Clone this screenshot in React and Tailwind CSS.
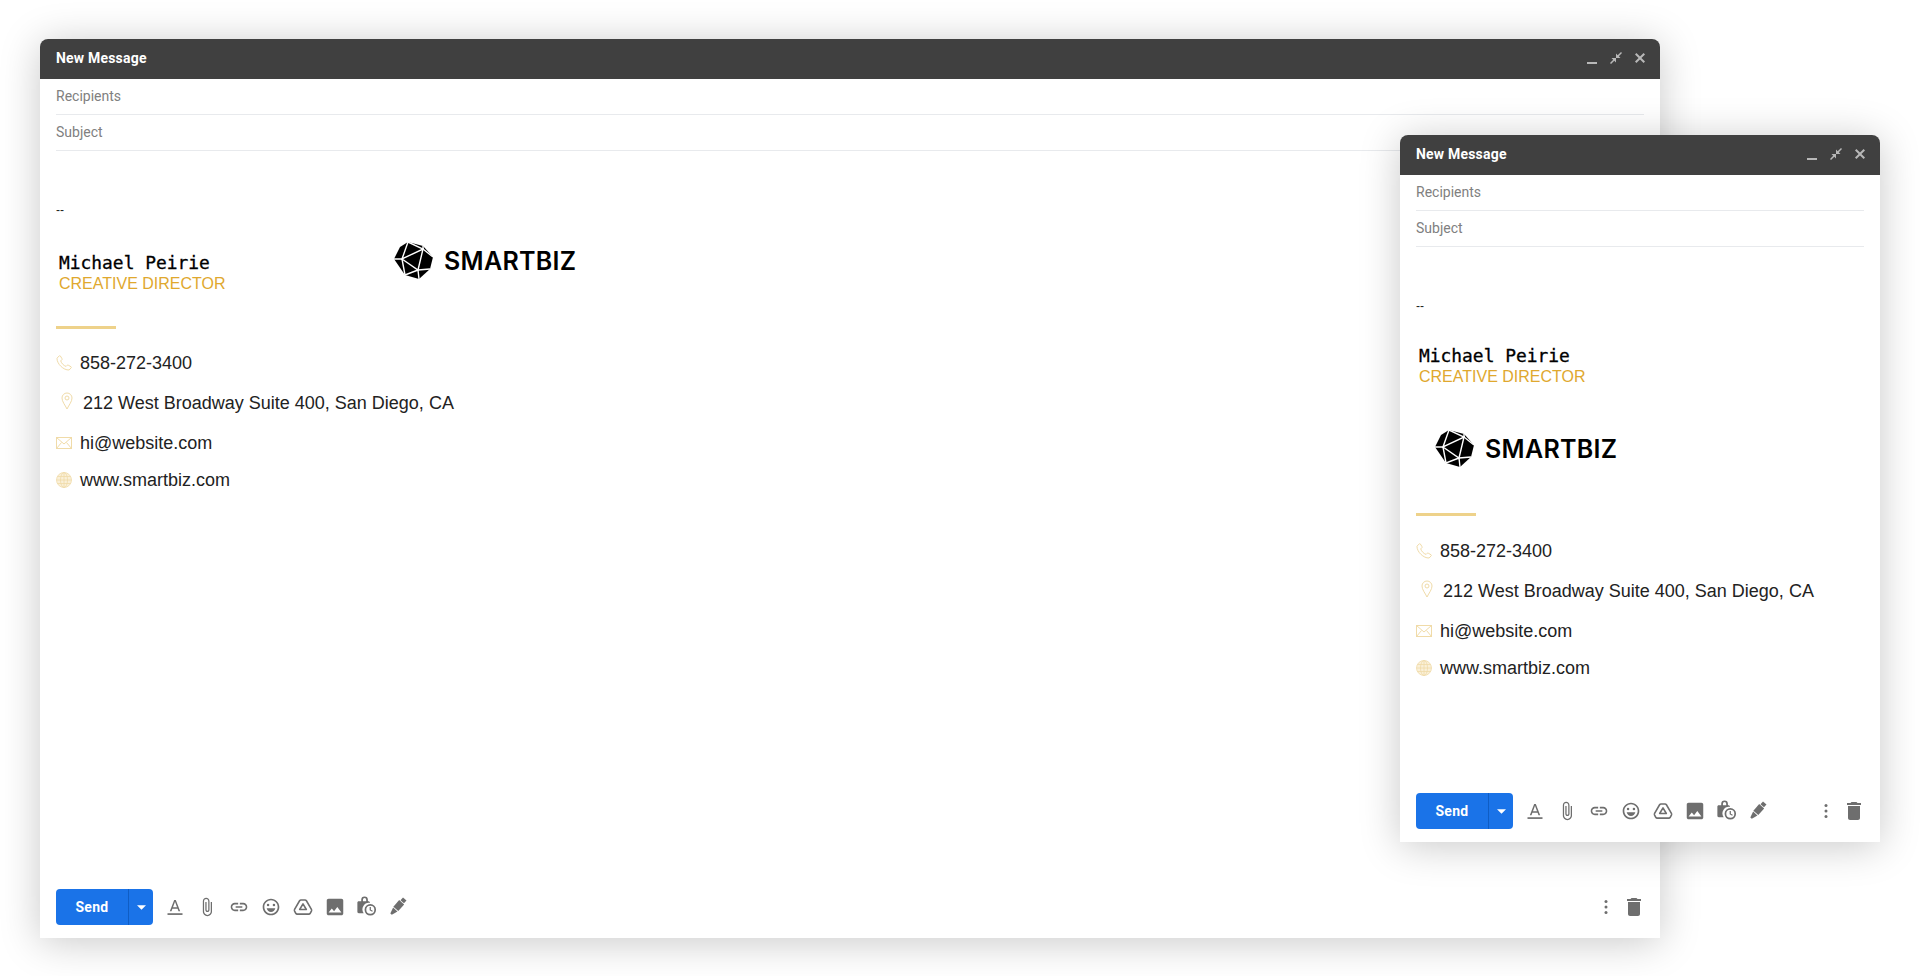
const Ic = ({ children, className = "w-5 h-5" }) => (
  <svg viewBox="0 0 24 24" className={"shrink-0 fill-[#6e6e6e] " + className}>{children}</svg>
);

function ToolIcons() {
  return (
    <div className="flex items-center ml-[12px] gap-[12px] -mt-[1px]">
      <Ic><path d="M11 3.500 5.800 17h2l1.100-3h6.200l1.100 3h2L13 3.500h-2zm-1.400 8.700L12 5.800l2.400 6.400H9.600z" /><rect x="3" y="19.500" width="18" height="2" /></Ic>
      <Ic><path d="M16.500 6v11.500c0 2.210-1.790 4-4 4s-4-1.790-4-4V5c0-1.380 1.120-2.500 2.500-2.500s2.500 1.120 2.500 2.500v10.500c0 .55-.45 1-1 1s-1-.45-1-1V6H10v9.500c0 1.380 1.120 2.500 2.500 2.500s2.500-1.120 2.500-2.500V5c0-2.210-1.790-4-4-4S7 2.790 7 5v12.500c0 3.040 2.460 5.500 5.500 5.500s5.500-2.460 5.500-5.500V6h-1.500z" /></Ic>
      <Ic><path d="M3.900 12c0-1.710 1.390-3.100 3.100-3.100h4V7H7c-2.760 0-5 2.240-5 5s2.240 5 5 5h4v-1.900H7c-1.710 0-3.100-1.390-3.100-3.100zM8 13h8v-2H8v2zm9-6h-4v1.900h4c1.710 0 3.100 1.390 3.100 3.100s-1.390 3.100-3.100 3.100h-4V17h4c2.760 0 5-2.240 5-5s-2.240-5-5-5z" /></Ic>
      <Ic><path d="M11.990 2C6.470 2 2 6.480 2 12s4.470 10 9.990 10C17.520 22 22 17.520 22 12S17.520 2 11.990 2zM12 20c-4.420 0-8-3.580-8-8s3.580-8 8-8 8 3.580 8 8-3.580 8-8 8z" /><circle cx="8.500" cy="9.500" r="1.500" /><circle cx="15.500" cy="9.500" r="1.500" /><path d="M6.800 13.500h10.400c-.6 2.600-2.700 4.500-5.200 4.500s-4.600-1.900-5.200-4.500z" /></Ic>
      <Ic><path d="M9.600 3.500h4.800c.7 0 1.300.4 1.700 1l6 10.400c.3.600.3 1.400 0 2l-1.400 2.600c-.4.600-1 1-1.700 1H5c-.7 0-1.300-.4-1.700-1l-1.400-2.600c-.3-.6-.3-1.400 0-2l6-10.400c.4-.6 1-1 1.700-1z" fill="none" stroke="#6e6e6e" strokeWidth="1.900" /><path d="M12 8.200 16 15H8z" fill="none" stroke="#6e6e6e" strokeWidth="1.900" strokeLinejoin="round" /></Ic>
      <Ic className="w-[22px] h-[22px] -mx-[1px]"><path d="M21 19V5c0-1.100-.9-2-2-2H5c-1.100 0-2 .9-2 2v14c0 1.100.9 2 2 2h14c1.100 0 2-.9 2-2zM8.500 13.500l2.500 3.010L14.500 12l4.500 6H5l3.500-4.500z" /></Ic>
      <Ic className="w-[23px] h-[23px] -mx-[1.500px] -translate-x-[1.500px] -translate-y-[1px]"><path d="M7 7.500V6a3.500 3.500 0 0 1 7 0v1.500h.5c1 0 1.500.6 1.500 1.500v.3a6.800 6.800 0 0 0-6.400 10.700H4.500c-1 0-1.500-.6-1.500-1.500V9c0-.9.5-1.500 1.500-1.500H7zm1.800 0h3.400V6a1.700 1.700 0 0 0-3.400 0v1.500z" /><path d="M16.500 10.500a6 6 0 1 0 0 12 6 6 0 0 0 0-12zm0 10.200a4.200 4.200 0 1 1 0-8.400 4.200 4.200 0 0 1 0 8.400zm.6-7.200h-1.300v3.500l2.700 1.600.6-1-2-1.200v-2.900z" /></Ic>
      <Ic className="w-5 h-5 -translate-x-[1.500px]">
        <g transform="rotate(42 12 12)">
          <rect x="9.200" y="-1" width="5.600" height="4.500" />
          <path d="M8 4.500h8v10.500h-8z" />
          <path d="M8.500 16h7L13.200 23.500h-2.400z" />
        </g>
      </Ic>
    </div>
  );
}

function Logo({ className = "" }) {
  return (
    <div className={"flex items-center h-[40px] " + className}>
      <svg viewBox="0 0 40 38" className="w-[40px] h-[38px] shrink-0">
        <polygon points="14,0 29,4 39,15 36,27 25,37 11,33 0,17 6,5" fill="#000000" />
        <g stroke="#ffffff" strokeWidth="1.400" fill="none">
          <path d="M14,0 L8,17 L29,7 L24,28 L8,17" />
          <path d="M14,0 L29,7 L39,15" />
          <path d="M29,4 L29,7" />
          <path d="M24,28 L36,27 M24,28 L25,37 M24,28 L11,33 L8,17 L0,17" />
        </g>
      </svg>
      <span className="ml-[10px] font-['Inter','Liberation_Sans',sans-serif] text-[25px] leading-none font-semibold text-black tracking-[0.3px]">SMARTBIZ</span>
    </div>
  );
}

const ci = "shrink-0 fill-none stroke-[#f0dba8]";

function Contacts() {
  return (
    <div className="mt-[14px] font-['Liberation_Sans',sans-serif] text-[18px] text-[#222222]">
      <div className="flex items-center h-[40px]">
        <svg viewBox="0 0 16 16" className={"w-4 h-4 " + ci} strokeWidth="1"><path d="M1 3.200 3.300.8c.4-.3.8-.3 1 .1l1.700 2.800c.2.4.2.7-.1 1L4.700 5.900c.7 2.300 3 4.800 5.400 5.500l1.200-1.200c.3-.3.7-.3 1 0l2.800 1.600c.4.2.4.7.1 1l-2.100 2.200c-5.600.3-12.300-6.200-12.100-11.800z" /></svg>
        <span className="ml-[8px]">858-272-3400</span>
      </div>
      <div className="flex items-center h-[40px]">
        <svg viewBox="0 0 12 18" className={"ml-[5px] -mt-[4px] w-[12px] h-[18px] " + ci} strokeWidth="1"><path d="M6 17C4 13 1 9.500 1 6a5 5 0 0 1 10 0c0 3.500-3 7-5 11z" /><circle cx="6" cy="6" r="2" /></svg>
        <span className="ml-[10px]">212 West Broadway Suite 400, San Diego, CA</span>
      </div>
      <div className="flex items-center h-[40px]">
        <svg viewBox="0 0 16 12" className={"w-4 h-3 " + ci} strokeWidth="1"><rect x=".5" y=".5" width="15" height="11" /><path d="M.5.500 8 7l7.500-6.500M.5 11.500 5.500 5.500M15.500 11.500l-5-6" /></svg>
        <span className="ml-[8px]">hi@website.com</span>
      </div>
      <div className="flex items-center h-[34px]">
        <svg viewBox="0 0 16 16" className={"w-4 h-4 -mt-[1px] " + ci} strokeWidth=".8"><circle cx="8" cy="8" r="7.500" fill="#faf0d8" /><ellipse cx="8" cy="8" rx="3.500" ry="7.500" /><path d="M8 .5v15M.5 8h15M1.500 4.500h13M1.500 11.500h13" /></svg>
        <span className="ml-[8px]">www.smartbiz.com</span>
      </div>
    </div>
  );
}

function Name({ className = "" }) {
  return (
    <div className={"pl-[3px] " + className}>
      <div className="font-['DejaVu_Sans_Mono',monospace] text-[17.9px] leading-[21px] text-black [-webkit-text-stroke:0.3px_black]">Michael Peirie</div>
      <div className="font-['Liberation_Sans',sans-serif] text-[16px] leading-[21px] text-[#e0a82e]">CREATIVE DIRECTOR</div>
    </div>
  );
}

function Compose({ stacked, className }) {
  return (
    <div className={"absolute flex flex-col bg-white rounded-t-[8px] shadow-[0_4px_40px_rgba(0,0,0,0.22)] font-['Roboto',sans-serif] " + className}>
      <div className="flex items-center h-[40px] shrink-0 rounded-t-[8px] bg-[#404040] pl-[16px] pr-[12px]">
        <span className="text-[14px] font-bold text-white tracking-[0.2px] -mt-[1px]">New Message</span>
        <div className="ml-auto flex items-center gap-[8px]">
          <svg viewBox="0 0 16 16" className="w-4 h-4 fill-[#b8b8b8]"><rect x="3" y="11" width="10" height="2" /></svg>
          <svg viewBox="0 0 16 16" className="w-4 h-4 -mt-[2px] fill-[#b8b8b8]"><path d="M14 3 10.800 6.200 12.500 8H8V3.500l1.700 1.700L13 2zM2 13l3.200-3.200L3.500 8H8v4.500l-1.700-1.700L3 14z" /></svg>
          <svg viewBox="0 0 16 16" className="w-4 h-4 -mt-[2px] fill-[#b8b8b8]"><path d="M4.400 3 8 6.600 11.600 3 13 4.400 9.400 8l3.600 3.600-1.400 1.400L8 9.400 4.400 13 3 11.600 6.600 8 3 4.400z" /></svg>
        </div>
      </div>
      <div className="px-[16px] text-[14px] text-[#808080] shrink-0">
        <div className="flex items-center h-[36px] border-b border-[#e8eaed]">Recipients</div>
        <div className="flex items-center h-[36px] border-b border-[#e8eaed]">Subject</div>
      </div>
      <div className="flex-1 px-[16px] pt-[48px]">
        <div className="h-[20px] flex items-center pt-[1px] font-['Liberation_Sans',sans-serif] text-[12px] text-[#222222]">--</div>
        {stacked ? (
          <>
            <Name className="mt-[30px]" />
            <Logo className="mt-[42px] ml-[19px]" />
            <div className="mt-[44px] mb-[15px] w-[60px] h-[3px] bg-[#eed28a]" />
          </>
        ) : (
          <>
            <div className="flex items-start">
              <Name className="mt-[33px] w-[338px]" />
              <Logo className="mt-[22px]" />
            </div>
            <div className="mt-[32px] mb-[14px] w-[60px] h-[3px] bg-[#eed28a]" />
          </>
        )}
        <Contacts />
      </div>
      <div className="flex items-center h-[36px] mb-[13px] px-[16px] shrink-0">
        <div className="flex items-center h-[36px] rounded-[4px] bg-[#1a73e8] text-white">
          <span className="flex items-center justify-center w-[72px] h-full text-[14px] font-bold tracking-[0.3px]">Send</span>
          <span className="flex items-center justify-center w-[25px] h-full border-l border-[#0f5dc4]">
            <svg viewBox="0 0 10 5" className="w-[9px] h-[5px] fill-white"><path d="M0 0h10L5 5z" /></svg>
          </span>
        </div>
        <ToolIcons />
        <div className="ml-auto flex items-center gap-[6px] -mr-[2px] -mt-[1px]">
          <Ic><circle cx="12" cy="5.500" r="1.800" /><circle cx="12" cy="12" r="1.800" /><circle cx="12" cy="18.500" r="1.800" /></Ic>
          <Ic className="w-6 h-6"><path d="M6 19c0 1.100.9 2 2 2h8c1.100 0 2-.9 2-2V7H6v12zM19 4h-3.500l-1-1h-5l-1 1H5v2h14V4z" /></Ic>
        </div>
      </div>
    </div>
  );
}

export default function App() {
  return (
    <div className="relative w-[1920px] h-[976px] overflow-hidden bg-white">
      <Compose className="left-[40px] top-[39px] w-[1620px] h-[899px]" />
      <Compose stacked className="left-[1400px] top-[135px] w-[480px] h-[707px]" />
    </div>
  );
}
